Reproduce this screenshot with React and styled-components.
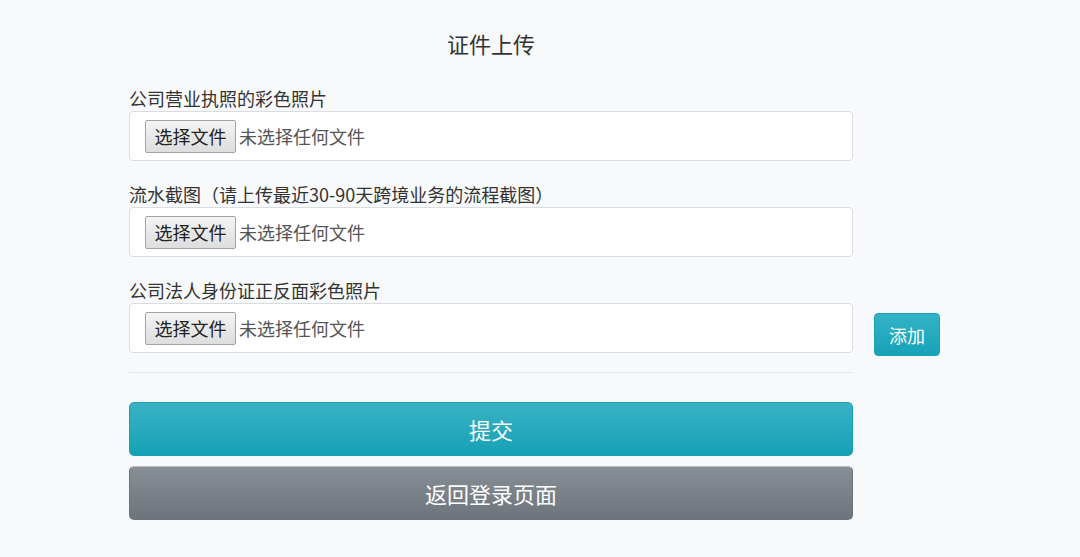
import styled, { createGlobalStyle } from "styled-components"

const GlobalStyle = createGlobalStyle`
  html, body {
    margin: 0;
    padding: 0;
    background: #f8f9fa;
    font-family: "Noto Sans CJK SC", "Noto Sans", sans-serif;
    color: #333333;
  }
`

const campos = [
  { rotulo: "公司营业执照的彩色照片" },
  { rotulo: "流水截图（请上传最近30-90天跨境业务的流程截图）" },
  { rotulo: "公司法人身份证正反面彩色照片", adicionar: true }
]

export default function App() {
  return (
    <Page>
      <GlobalStyle />
      <Form>
        <Title>证件上传</Title>
        {campos.map((c, i) => (
          <Group key={i}>
            <Label>{c.rotulo}</Label>
            <Row>
              <FileBox>
                <ChooseButton>选择文件</ChooseButton>
                <NoFile>未选择任何文件</NoFile>
              </FileBox>
              {c.adicionar && <AddButton>添加</AddButton>}
            </Row>
          </Group>
        ))}
        <Divider />
        <BigButton>提交</BigButton>
        <BigButton $secondary>返回登录页面</BigButton>
      </Form>
    </Page>
  )
}

const Page = styled.div`
  width: 1080px;
  height: 557px;
  padding-left: 129px;
  box-sizing: border-box;
  overflow: hidden;
`
const Form = styled.div`
  width: 724px;
  display: flex;
  flex-direction: column;
`
const Title = styled.h2`
  margin: 28px 0 28px 0;
  text-align: center;
  font-size: 22px;
  font-weight: 400;
  line-height: 30px;
  color: #333333;
`
const Group = styled.div`
  display: flex;
  flex-direction: column;
  margin-bottom: 21px;
`
const Label = styled.div`
  font-size: 18px;
  line-height: 24px;
  margin-bottom: 1px;
  color: #333333;
`
const Row = styled.div`
  display: flex;
  align-items: flex-start;
  width: 724px;
  overflow: visible;
`
const FileBox = styled.div`
  flex: 0 0 724px;
  box-sizing: border-box;
  height: 50px;
  background: #ffffff;
  border: 1px solid #d9dde1;
  border-radius: 4px;
  display: flex;
  align-items: center;
  padding-left: 15px;
`
const ChooseButton = styled.button`
  height: 33px;
  width: 91px;
  padding: 0;
  font-family: "Noto Sans CJK SC", sans-serif;
  font-size: 18px;
  color: #222222;
  background: linear-gradient(#f4f4f4, #dddddd);
  border: 1px solid #a3a3a3;
  border-radius: 2px;
`
const NoFile = styled.span`
  margin-left: 3px;
  font-size: 18px;
  color: #555555;
`
const AddButton = styled.button`
  flex: 0 0 auto;
  margin: 10px 0 0 21px;
  width: 66px;
  height: 43px;
  font-family: "Noto Sans CJK SC", sans-serif;
  font-size: 18px;
  color: #ffffff;
  background: linear-gradient(#33b3c6, #17a2b8);
  border: 1px solid #1a9fb3;
  border-radius: 4px;
`
const Divider = styled.hr`
  width: 100%;
  margin: -5px 0 29px 0;
  border: 0;
  border-top: 1px solid #e3e5e8;
`
const BigButton = styled.button`
  height: 54px;
  width: 100%;
  margin-bottom: 10px;
  font-family: "Noto Sans CJK SC", sans-serif;
  font-size: 22px;
  color: #ffffff;
  border-radius: 5px;
  background: ${p => p.$secondary
    ? "linear-gradient(#878e96, #6d747c)"
    : "linear-gradient(#3ab2c4, #15a1b6)"};
  border: 1px solid ${p => p.$secondary ? "#6c737b" : "#18a0b5"};
  border-top-color: ${p => p.$secondary ? "#b9bec3" : "#18a0b5"};
`
